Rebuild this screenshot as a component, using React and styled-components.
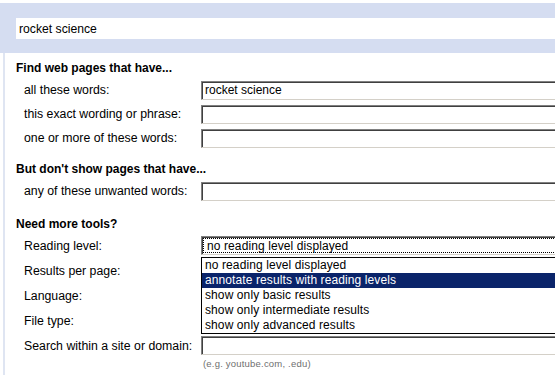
import React from 'react';
import styled, { createGlobalStyle } from 'styled-components';

const GlobalStyle = createGlobalStyle`
  html, body {
    margin: 0;
    padding: 0;
    background: #ffffff;
    overflow: hidden;
  }
  body {
    font-family: "Liberation Sans", Arial, sans-serif;
    color: #000000;
  }
`;

const Page = styled.div`
  width: 555px;
  height: 375px;
  overflow: hidden;
`;

const SearchBand = styled.div`
  margin-top: 3px;
  padding: 15px 0 14px 16px;
  background: #d5ddf1;
`;

const QueryBox = styled.div`
  height: 21px;
  background: #ffffff;
  display: flex;
  align-items: center;
  padding-left: 3px;
  font-size: 12.2px;
`;

const Main = styled.div`
  margin-left: 3px;
  border-left: 2px solid #dfe5f2;
  padding: 8px 0 0 11px;
  height: 320px;
`;

const Heading = styled.div`
  font-weight: bold;
  font-size: 12px;
  line-height: 15px;
  margin-top: ${(p) => p.$top || 0}px;
  margin-bottom: ${(p) => p.$bottom ?? 2}px;
`;

const Row = styled.div`
  display: grid;
  grid-template-columns: 177px 400px;
  align-items: center;
  height: ${(p) => p.$h || 24}px;
  padding-left: 8px;
  font-size: 12.3px;
`;

const Label = styled.span`
  white-space: nowrap;
`;

const TextBox = styled.div`
  position: relative;
  height: 19px;
  box-sizing: border-box;
  border-top: 1px solid #808080;
  border-left: 1px solid #808080;
  border-bottom: 1px solid #d4d0c8;
  box-shadow: inset 1px 1px 0 #404040;
  background: #ffffff;
  display: flex;
  align-items: center;
  padding-left: 3px;
  font-size: 12px;
`;

const SelectBox = styled(TextBox)`
  padding: 1px;
`;

const SelectFocus = styled.div`
  flex: 1;
  height: 100%;
  box-sizing: border-box;
  border: 1px dotted #000000;
  display: flex;
  align-items: center;
  padding-left: 3px;
  font-size: 12px;
  letter-spacing: 0.1px;
`;

const DropList = styled.div`
  position: absolute;
  top: 20px;
  left: -1px;
  width: 400px;
  border: 1px solid #000000;
  background: #ffffff;
  z-index: 5;
`;

const Option = styled.div`
  height: 15px;
  line-height: 15px;
  padding-left: 3px;
  font-size: 12px;
  letter-spacing: 0.1px;
  background: ${(p) => (p.$active ? '#0a246a' : '#ffffff')};
  color: ${(p) => (p.$active ? '#ffffff' : '#000000')};
`;

const Hint = styled.div`
  grid-column: 2;
  padding-left: 2px;
  font-size: 9.5px;
  line-height: 12px;
  color: #6f6f6f;
  letter-spacing: 0.2px;
`;

const levels = [
  'no reading level displayed',
  'annotate results with reading levels',
  'show only basic results',
  'show only intermediate results',
  'show only advanced results',
];

export default function App() {
  return (
    <Page>
      <GlobalStyle />
      <SearchBand>
        <QueryBox>rocket science</QueryBox>
      </SearchBand>
      <Main>
        <Heading>Find web pages that have...</Heading>
        <Row>
          <Label>all these words:</Label>
          <TextBox>rocket science</TextBox>
        </Row>
        <Row>
          <Label>this exact wording or phrase:</Label>
          <TextBox />
        </Row>
        <Row>
          <Label>one or more of these words:</Label>
          <TextBox />
        </Row>

        <Heading $top={12}>But don't show pages that have...</Heading>
        <Row>
          <Label>any of these unwanted words:</Label>
          <TextBox />
        </Row>

        <Heading $top={14} $bottom={1}>Need more tools?</Heading>
        <Row $h={25}>
          <Label>Reading level:</Label>
          <SelectBox>
            <SelectFocus>no reading level displayed</SelectFocus>
            <DropList>
              {levels.map((l, i) => (
                <Option key={l} $active={i === 1}>{l}</Option>
              ))}
            </DropList>
          </SelectBox>
        </Row>
        <Row $h={25}>
          <Label>Results per page:</Label>
          <SelectBox />
        </Row>
        <Row $h={25}>
          <Label>Language:</Label>
          <SelectBox />
        </Row>
        <Row $h={25}>
          <Label>File type:</Label>
          <SelectBox />
        </Row>
        <Row $h={25}>
          <Label>Search within a site or domain:</Label>
          <TextBox />
        </Row>
        <Row $h={12}>
          <Hint>(e.g. youtube.com, .edu)</Hint>
        </Row>
      </Main>
    </Page>
  );
}
